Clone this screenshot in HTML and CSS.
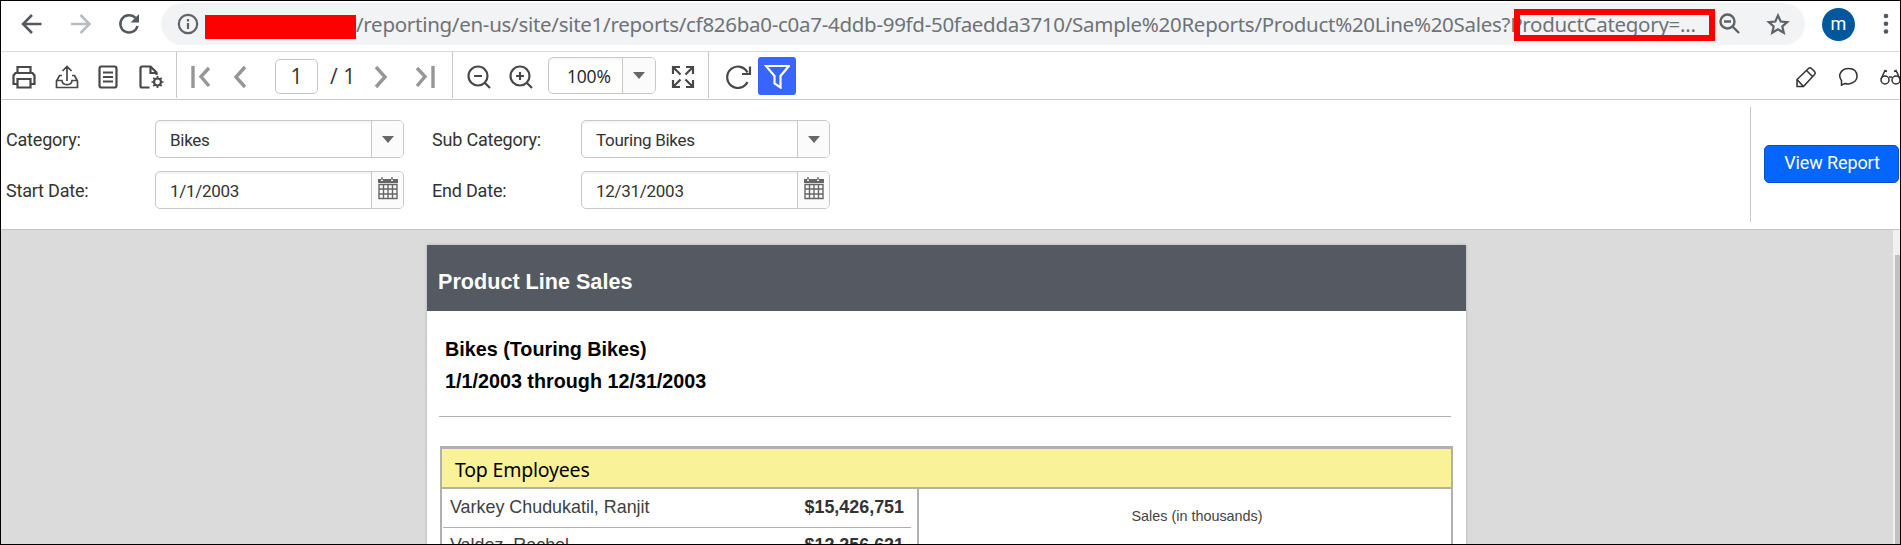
FILE: index.html
```html
<!DOCTYPE html>
<html lang="en">
<head>
<meta charset="utf-8">
<title>Product Line Sales</title>
<link rel="stylesheet" href="styles.css">
</head>
<body>
<div class="window">
  <header class="browser">
    <svg class="nav back" width="22" height="22" viewBox="0 0 22 22"><path d="M20.500 11H2.500M11 2L2 11l9 9"/></svg>
    <svg class="nav forward" width="22" height="22" viewBox="0 0 22 22"><path d="M1 11h18M10.500 2l9 9-9 9"/></svg>
    <svg class="nav reload" width="22" height="22" viewBox="0 0 22 22"><path d="M17.500 5A8.700 8.700 0 1 0 19.500 13"/><path class="solid" d="M21 1v8.500h-8.500z"/></svg>
    <div class="omnibox">
      <svg class="info" width="22" height="22" viewBox="0 0 22 22"><circle cx="11" cy="11" r="9.200"/><path d="M11 10v6M11 6v2.500"/></svg>
      <span class="redacted"></span>
      <span class="url">/reporting/en-us/site/site1/reports/cf826ba0-c0a7-4ddb-99fd-50faedda3710/Sample%20Reports/Product%20Line%20Sales?ProductCategory=...</span>
      <span class="highlight"></span>
      <svg class="lens" width="22" height="22" viewBox="0 0 22 22"><circle cx="8.500" cy="8.500" r="7"/><path d="M13.500 13.500l6.500 6.500M5 8.500h7"/></svg>
      <svg class="star" width="24" height="22" viewBox="0 0 24 22"><path d="M12 2.500l2.700 6 6.500.6-4.900 4.300 1.500 6.400L12 16.400l-5.800 3.400 1.500-6.400-4.900-4.300 6.500-.6z"/></svg>
    </div>
    <span class="avatar">m</span>
    <svg class="dots" width="6" height="22" viewBox="0 0 6 22"><circle cx="3" cy="3" r="2.300"/><circle cx="3" cy="10.800" r="2.300"/><circle cx="3" cy="18.500" r="2.300"/></svg>
  </header>

  <nav class="toolbar">
    <div class="group files">
      <svg width="24" height="24" viewBox="0 0 24 24"><path d="M5.500 8V2h13v6M5.500 19H1.500V10.500l2-2.500h17l2 2.500V19h-4M5.500 14h13v8.500h-13z"/></svg>
      <svg class="thin" width="24" height="24" viewBox="0 0 24 24"><path d="M12 16V2M7.500 6L12 1.500 16.500 6M7 10.500H4.500L1.500 16v6.500h21V16l-3-5.500H17M1.500 15.500H7c.5 5.500 9.500 5.500 10 0h5.500"/></svg>
      <svg width="20" height="24" viewBox="0 0 20 24"><rect x="1.500" y="1.500" width="17" height="21" rx="2"/><path d="M5 7.500h10M5 12h10M5 16.500h10"/></svg>
      <svg width="26" height="24" viewBox="0 0 26 24"><path d="M10.500 22.500H3a1.500 1.500 0 0 1-1.500-1.500V3A1.500 1.500 0 0 1 3 1.500h8.500l6 6V10"/><path d="M11.500 2v6h6"/><circle cx="18.500" cy="17" r="3.500"/><path class="thin" d="M18.500 11v2.500M18.500 20.500V23M12.500 17H15M22 17h2.500M14.300 12.800l1.800 1.800M20.900 19.400l1.800 1.800M14.300 21.200l1.800-1.800M20.900 14.600l1.800-1.800"/></svg>
    </div>
    <div class="group pager">
      <svg width="20" height="24" viewBox="0 0 20 24"><path d="M2 1v22M18 3l-8 8.500 8 9.500"/></svg>
      <svg width="14" height="24" viewBox="0 0 14 24"><path d="M12 2L3 12l9 10"/></svg>
      <span class="page-input">1</span>
      <span class="page-total">/ 1</span>
      <svg width="14" height="24" viewBox="0 0 14 24"><path d="M2 2l9 10-9 10"/></svg>
      <svg width="20" height="24" viewBox="0 0 20 24"><path d="M18 1v22M2 3l8 8.500L2 21"/></svg>
    </div>
    <div class="group zoom">
      <svg width="24" height="24" viewBox="0 0 24 24"><circle cx="11" cy="11" r="9.500"/><path d="M18 18l5 5M7 11h8"/></svg>
      <svg width="24" height="24" viewBox="0 0 24 24"><circle cx="11" cy="11" r="9.500"/><path d="M18 18l5 5M7 11h8M11 7v8"/></svg>
      <div class="zoom-select"><span>100%</span><b><i class="caret"></i></b></div>
      <svg width="24" height="24" viewBox="0 0 24 24"><path d="M9 2H2v7M2 2l7.500 7.500M15 2h7v7M22 2l-7.500 7.500M2 15v7h7M2 22l7.500-7.500M22 15v7h-7M22 22l-7.500-7.500"/></svg>
    </div>
    <div class="group last">
      <svg width="27" height="24" viewBox="0 0 27 24"><path d="M22.500 7.500A10.700 10.700 0 1 0 22.500 17M25 1.500V9h-8"/></svg>
      <span class="filter"><svg width="26" height="25" viewBox="0 0 26 25"><path d="M2 2h23l-8.500 10v11.500l-6-4V12z"/></svg></span>
    </div>
    <div class="side">
      <svg width="20" height="22" viewBox="0 0 20 22"><path d="M1 20.500v-7L12.500 2.500c1-1 2-1 3 0l3 3c1 1 1 2 0 3L7.500 20.500zM1 13.500l6.500 7M10.500 4.500l6.500 6.500"/></svg>
      <svg width="20" height="22" viewBox="0 0 20 22"><path d="M3.500 19v-4.500C-1 8.500 4 2.500 10.500 2.500S19 6 19 10.500 13 19.500 7 17.500z"/></svg>
      <svg width="26" height="22" viewBox="0 0 26 22"><circle cx="5" cy="14" r="4"/><circle cx="16" cy="14" r="4"/><path d="M9 11h3M1 13L5 4.500l2 1M20 13l-4-8.500-2 1"/></svg>
    </div>
  </nav>

  <section class="params">
    <div class="fields">
      <span class="label">Category:</span>
      <div class="field"><span>Bikes</span><b><i class="caret"></i></b></div>
      <span class="label">Sub Category:</span>
      <div class="field"><span>Touring Bikes</span><b><i class="caret"></i></b></div>
      <span class="label">Start Date:</span>
      <div class="field"><span>1/1/2003</span><b><svg class="cal" width="20" height="23" viewBox="0 0 20 23"><path class="solid" d="M0 2h3v2h2V2h8v2h2V2h5v4H0z"/><path d="M4 0v3M14 0v3M1 7.500h18v14H1zM5.500 7.500v14M10 7.500v14M14.500 7.500v14M1 12h18M1 17h18"/></svg></b></div>
      <span class="label">End Date:</span>
      <div class="field"><span>12/31/2003</span><b><svg class="cal" width="20" height="23" viewBox="0 0 20 23"><path class="solid" d="M0 2h3v2h2V2h8v2h2V2h5v4H0z"/><path d="M4 0v3M14 0v3M1 7.500h18v14H1zM5.500 7.500v14M10 7.500v14M14.500 7.500v14M1 12h18M1 17h18"/></svg></b></div>
    </div>
    <div class="submit"><button class="view-report">View Report</button></div>
  </section>

  <main class="viewer">
    <article class="page">
      <h1 class="title">Product Line Sales</h1>
      <div class="summary">
        <div>Bikes (Touring Bikes)</div>
        <div class="dates">1/1/2003 through 12/31/2003</div>
      </div>
      <div class="employees">
        <h2 class="table-title">Top Employees</h2>
        <div class="table-body">
          <div class="people">
            <div class="person"><span>Varkey Chudukatil, Ranjit</span><strong>$15,426,751</strong></div>
            <div class="person"><span>Valdez, Rachel</span><strong>$12,256,621</strong></div>
          </div>
          <div class="chart">Sales (in thousands)</div>
        </div>
      </div>
    </article>
    <div class="scrollbar"><div class="thumb"></div></div>
  </main>
</div>
</body>
</html>
```
FILE: styles.css
```css
* { box-sizing: border-box; }
body { margin: 0; font-family: Roboto, "Liberation Sans", sans-serif; color: #333; }
svg { display: block; flex: none; fill: none; }

.window {
  width: 1901px; height: 545px; border: 1px solid #000;
  overflow: hidden; background: #fff;
  display: flex; flex-direction: column;
}

/* Browser chrome */
.browser { height: 51px; flex: none; display: flex; align-items: center; padding: 0 0 4px 20px; border-bottom: 1px solid #d9dadb; }
.nav { stroke: #55585c; stroke-width: 2.5; }
.nav .solid { fill: #55585c; stroke: none; }
.forward { stroke: #b9babc; margin-left: 27px; }
.reload { margin-left: 26px; }
.omnibox {
  position: relative; width: 1644px; height: 42px; margin-left: 21px; padding-left: 16px;
  border-radius: 21px; background: #f1f3f4; display: flex; align-items: center; flex: none;
}
.info { stroke: #5f6368; stroke-width: 2.2; }
.redacted { width: 151px; height: 24px; margin: 6px 0 0 6px; background: #f00; flex: none; }
.url {
  width: 1363px; font: 20.5px/30px "Noto Sans", "Open Sans", sans-serif;
  color: #6f7276; white-space: nowrap; letter-spacing: -0.285px; flex: none;
}
.highlight { position: absolute; left: 1353px; top: 6px; width: 201px; height: 32px; border: 6px solid #f00; }
.lens, .star { stroke: #5f6368; stroke-width: 2.4; }
.star { margin-left: 25px; stroke-width: 2.2; }
.avatar {
  width: 33px; height: 33px; margin-left: 17px; border-radius: 50%; background: #01579b; flex: none;
  color: #fff; font-size: 18px; line-height: 31px; text-align: center;
}
.dots { margin-left: 28px; fill: #55585c; }

/* Report toolbar */
.toolbar { height: 48px; flex: none; display: flex; border-bottom: 1px solid #c8c8c8; }
.group { display: flex; align-items: center; padding-top: 3px; border-right: 1px solid #c8c8c8; margin-bottom: 1px; flex: none; stroke: #484848; stroke-width: 2.2; }
.group.last { border: 0; }
.thin { stroke-width: 1.7; }
.files { width: 176px; padding-left: 11px; gap: 19px; }
.files svg:last-child { margin-left: 2px; }
.pager { width: 276px; padding-left: 14px; stroke: #969696; stroke-width: 3.4; }
.pager svg:nth-child(2) { margin-left: 22px; }
.page-input {
  width: 43px; height: 35px; margin-left: 28px; border: 1px solid #c4c4c4; border-radius: 5px;
  text-align: center; font: 21px/33px "Open Sans", sans-serif; color: #333;
}
.page-total { width: 24px; margin: 0 20px 0 12px; font: 21px/35px "Open Sans", sans-serif; white-space: nowrap; }
.pager svg:last-child { margin-left: 27px; }
.zoom { width: 256px; padding-left: 14px; }
.zoom svg:nth-child(2) { margin-left: 18px; }
.zoom-select, .field { display: flex; border: 1px solid #c8c8c8; border-radius: 5px; background: #fff; overflow: hidden; box-shadow: inset 0 2px 1px #f5f5f5; }
.zoom-select { width: 108px; height: 37px; margin: -2px 15px 0 15px; }
.zoom-select span { width: 73px; padding-left: 18px; font: 17.5px/37px "Open Sans", sans-serif; color: #222; letter-spacing: -0.2px; }
.zoom-select b, .field b { flex: 1; border-left: 1px solid #c8c8c8; background: #fbfbfb; display: flex; align-items: center; justify-content: center; }
.caret { border: 6px solid transparent; border-top: 7px solid #666; border-bottom: 0; }
.last { padding-left: 16px; }
.filter { width: 38px; height: 38px; margin: -1px 0 0 6px; border-radius: 3px; background: #3865ff; stroke: #fff; display: flex; align-items: center; justify-content: center; }
.side { margin-left: auto; width: 104px; display: flex; align-items: center; gap: 22px; padding-top: 2px; flex: none; overflow: hidden; stroke: #333; stroke-width: 1.5; }

/* Parameters */
.params { height: 130px; flex: none; display: flex; justify-content: space-between; border-bottom: 1px solid #c4c4c4; }
.fields { padding: 20px 0 0 5px; display: grid; grid-template-columns: 149px 249px 177px 249px; grid-auto-rows: 38px; row-gap: 13px; }
.label { font-size: 18px; line-height: 40px; letter-spacing: -0.2px; }
.label:nth-child(4n + 3) { padding-left: 28px; }
.field span { width: 215px; padding-left: 14px; font-size: 17px; line-height: 39px; letter-spacing: -0.28px; }
.cal { stroke: #666; stroke-width: 1.4; margin-top: -3px; }
.cal .solid { fill: #666; stroke: none; }
.submit { width: 150px; height: 115px; margin-top: 7px; padding: 38px 0 0 13px; border-left: 1px solid #c8c8c8; }
.view-report { display: block; width: 135px; height: 38px; padding: 0 0 3px 1px; border: 1px solid #0450cc; border-radius: 5px; background: #0566ff; color: #fff; font: 18px Roboto, sans-serif; white-space: nowrap; letter-spacing: -0.1px; }

/* Report */
.viewer { flex: 1; min-height: 0; display: flex; background: #dbdbdb; }
.page { width: 1039px; height: 400px; margin: 15px 0 0 426px; background: #fff; box-shadow: 0 0 3px #aaa; flex: none; font-family: "Liberation Sans", Arial, sans-serif; }
.title { margin: 0; height: 66px; padding: 4px 0 0 11px; background: #555a62; color: #fff; font-size: 21.6px; line-height: 66px; }
.summary { height: 106px; margin: 0 15px 0 12px; padding: 22px 0 0 6px; border-bottom: 1px solid #b0b0b0; font-weight: bold; font-size: 19.75px; line-height: 32px; color: #000; }
.employees { height: 220px; margin: 29px 13px 0; border: 2px solid #b0b0b0; border-top-width: 3px; }
.table-title { margin: 0; height: 40px; padding-left: 13px; border-bottom: 2px solid #b0b0b0; background: #faf298; font: 19.5px/42px "Noto Sans", sans-serif; color: #000; letter-spacing: -0.2px; }
.table-body { display: flex; height: 175px; }
.people { width: 477px; padding: 0 6px 0 1px; border-right: 2px solid #b0b0b0; }
.person { height: 39px; padding: 0 7px; display: flex; justify-content: space-between; border-bottom: 1px solid #b0b0b0; font-size: 17.9px; line-height: 37px; color: #404040; }
.person strong { color: #333; }
.person + .person { line-height: 34px; }
.chart { flex: 1; padding: 17px 0 0 24px; text-align: center; font-size: 14.4px; line-height: 20px; color: #444; }
.scrollbar { width: 7px; margin-left: auto; padding: 25px 0 0 2px; background: #f1f1f1; }
.thumb { height: 400px; background: #c1c1c1; }
```
